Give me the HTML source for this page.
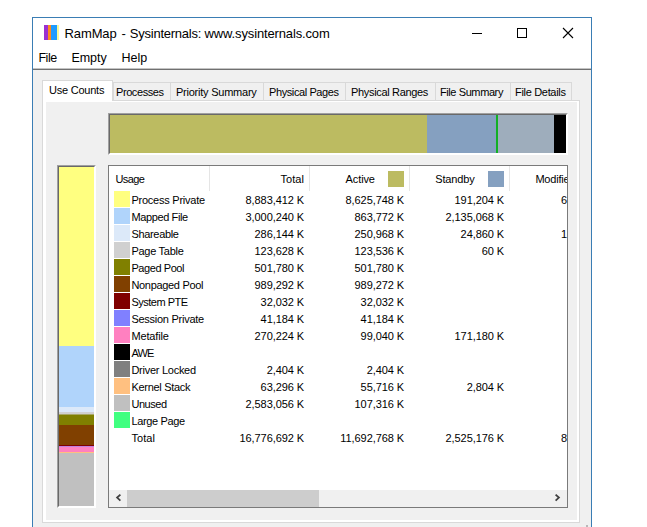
<!DOCTYPE html>
<html><head><meta charset="utf-8"><title>RamMap</title>
<style>
html,body{margin:0;padding:0;background:#fff;}
body{width:647px;height:527px;position:relative;overflow:hidden;font-family:"Liberation Sans",sans-serif;color:#000;}
div{position:absolute;box-sizing:border-box;}
.t{font-size:11px;line-height:16px;white-space:nowrap;height:16px;}
.r{text-align:right;letter-spacing:-0.08px;}
.nm{left:131.4px;}
.sw{left:114px;width:16px;height:16px;}
.tab{top:82px;height:18px;background:#f0f0f0;border:1px solid #d9d9d9;border-bottom:none;}
.hs{top:166px;width:1px;height:25px;background:#e5e5e5;}
.m{font-size:12.5px;line-height:18px;top:49px;white-space:nowrap;}
</style></head><body>
<!-- window frame -->
<div id="win" style="left:32px;top:17px;width:560px;height:520px;border:1px solid #3a7db4;background:#f0f0f0"></div>
<div id="title" style="left:33px;top:18px;width:558px;height:30px;background:#fff"></div>
<div id="icon" style="left:44px;top:25px;width:15px;height:15px;">
  <div style="left:0;top:0;width:4px;height:15px;background:#9b30d0"></div>
  <div style="left:4px;top:0;width:3px;height:15px;background:#ff8a1e"></div>
  <div style="left:7px;top:0;width:6px;height:15px;background:#1e9bff"></div>
  <div style="left:13px;top:0;width:2px;height:15px;background:#f6f99a"></div>
</div>
<div id="ttext" style="left:64.6px;top:25px;font-size:13px;line-height:18px;white-space:nowrap;letter-spacing:-0.138px">RamMap<span style="margin-left:1.4px;margin-right:0.8px"> -</span> <span style="letter-spacing:-0.248px">Sysinternals:</span> www.sysinternals.com</div>
<!-- caption buttons -->
<svg style="position:absolute;left:470px;top:18px" width="120" height="30" viewBox="0 0 120 30">
 <path d="M2 15.5h10" stroke="#000" stroke-width="1" fill="none"/>
 <rect x="47.5" y="10.5" width="9" height="9" stroke="#000" stroke-width="1" fill="none"/>
 <path d="M93 10l10 10M103 10l-10 10" stroke="#000" stroke-width="1.1" fill="none"/>
</svg>
<!-- menu -->
<div id="menu" style="left:33px;top:48px;width:558px;height:20px;background:#fff"></div>
<div class="m" id="mfile" style="left:38.4px;letter-spacing:-0.452px">File</div>
<div class="m" id="mempty" style="left:71.4px;letter-spacing:-0.034px">Empty</div>
<div class="m" id="mhelp" style="left:121.6px;letter-spacing:-0.073px">Help</div>
<div style="left:33px;top:68px;width:558px;height:1px;background:#c4c4c4"></div>
<div style="left:33px;top:69px;width:558px;height:1px;background:#707070"></div>
<!-- tab pane -->
<div id="pane" style="left:42px;top:100px;width:538px;height:423px;background:#fff;border:1px solid #d9d9d9"></div>
<div id="dlg" style="left:46px;top:102px;width:531px;height:418px;background:#f0f0f0"></div>
<!-- tabs -->
<div class="tab" style="left:113px;width:58px"></div><div class="t" style="left:116.0px;top:84px;letter-spacing:-0.42px">Processes</div>
<div class="tab" style="left:170px;width:94px"></div><div class="t" style="left:176.0px;top:84px;letter-spacing:-0.236px">Priority Summary</div>
<div class="tab" style="left:263px;width:83px"></div><div class="t" style="left:269.0px;top:84px;letter-spacing:-0.401px">Physical Pages</div>
<div class="tab" style="left:345px;width:91px"></div><div class="t" style="left:351.0px;top:84px;letter-spacing:-0.331px">Physical Ranges</div>
<div class="tab" style="left:435px;width:76px"></div><div class="t" style="left:439.9px;top:84px;letter-spacing:-0.395px">File Summary</div>
<div class="tab" style="left:510px;width:62px"></div><div class="t" style="left:515.1px;top:84px;letter-spacing:-0.328px">File Details</div>

<div id="tab0" style="left:42px;top:80px;width:71px;height:21px;background:#fff;border:1px solid #d9d9d9;border-bottom:none"></div>
<div class="t" style="left:49px;top:82px;letter-spacing:-0.232px">Use Counts</div>
<!-- top bar -->
<div id="hbar" style="left:108px;top:113px;width:460px;height:42px;border:1px solid;border-color:#a0a0a0 #fff #fff #a0a0a0;background:#fff">
 <div style="left:0;top:0;width:458px;height:40px;border:1px solid;border-color:#696969 #fff #fff #696969;background:#bcbb61">
  <div style="left:317px;top:0;width:69px;height:38px;background:#85a0c0"></div>
  <div style="left:386px;top:0;width:2px;height:38px;background:#12b024"></div>
  <div style="left:388px;top:0;width:56px;height:38px;background:#9eadbc"></div>
  <div style="left:444px;top:0;width:12px;height:38px;background:#000"></div>
 </div>
</div>
<!-- left bar -->
<div id="vbar" style="left:57px;top:165px;width:39px;height:343px;border:1px solid;border-color:#a0a0a0 #fff #fff #a0a0a0;background:#fff">
 <div style="left:0;top:0;width:37px;height:341px;border:1px solid;border-color:#696969 #fff #fff #696969;background:#ffff80">
  <div style="left:0;top:179px;width:35px;height:61px;background:#b0d4fb"></div>
  <div style="left:0;top:240px;width:35px;height:5px;background:#dce9f9"></div>
  <div style="left:0;top:245px;width:35px;height:2px;background:#d0d0d0"></div>
  <div style="left:0;top:247px;width:35px;height:1px;background:#a8a868"></div>
  <div style="left:0;top:248px;width:35px;height:10px;background:#808000"></div>
  <div style="left:0;top:258px;width:35px;height:20px;background:#804000"></div>
  <div style="left:0;top:278px;width:35px;height:1px;background:#800000"></div>
  <div style="left:0;top:279px;width:35px;height:1px;background:#c080e0"></div>
  <div style="left:0;top:280px;width:35px;height:5px;background:#ff80c0"></div>
  <div style="left:0;top:285px;width:35px;height:1px;background:#ffc080"></div>
  <div style="left:0;top:286px;width:35px;height:53px;background:#c0c0c0"></div>
 </div>
</div>
<!-- list -->
<div id="list" style="left:108px;top:165px;width:460px;height:343px;background:#fff;border:1px solid #7a7a7a"></div>
<div class="hs" style="left:209px"></div><div class="hs" style="left:309px"></div><div class="hs" style="left:409px"></div><div class="hs" style="left:509px"></div>
<div class="t" id="hU" style="left:115.4px;top:171px;letter-spacing:-0.599px">Usage</div>
<div class="t r" id="hT" style="right:343px;top:171px;letter-spacing:0.05px">Total</div>
<div class="t" id="hA" style="left:345.6px;top:171px;letter-spacing:-0.114px">Active</div>
<div class="t" id="hS" style="left:435.2px;top:171px;letter-spacing:-0.146px">Standby</div>
<div class="t" id="hM" style="left:535.4px;top:171px;width:31.6px;overflow:hidden;letter-spacing:-0.2px">Modified</div>
<div style="left:388px;top:171px;width:16px;height:16px;background:#bcbb61"></div>
<div style="left:488px;top:171px;width:16px;height:16px;background:#85a0c0"></div>
<div class="sw" style="top:191px;background:#ffff80"></div>
<div class="t nm" style="top:192px;letter-spacing:-0.231px">Process Private</div>
<div class="t r" style="top:192px;right:343px">8,883,412 K</div>
<div class="t r" style="top:192px;right:243px">8,625,748 K</div>
<div class="t r" style="top:192px;right:143px">191,204 K</div>
<div class="t r" style="top:192px;right:80px">6</div>
<div class="sw" style="top:208px;background:#b0d4fb"></div>
<div class="t nm" style="top:209px;letter-spacing:-0.375px">Mapped File</div>
<div class="t r" style="top:209px;right:343px">3,000,240 K</div>
<div class="t r" style="top:209px;right:243px">863,772 K</div>
<div class="t r" style="top:209px;right:143px">2,135,068 K</div>
<div class="sw" style="top:225px;background:#dce9f9"></div>
<div class="t nm" style="top:226px;letter-spacing:-0.32px">Shareable</div>
<div class="t r" style="top:226px;right:343px">286,144 K</div>
<div class="t r" style="top:226px;right:243px">250,968 K</div>
<div class="t r" style="top:226px;right:143px">24,860 K</div>
<div class="t r" style="top:226px;right:80px">1</div>
<div class="sw" style="top:242px;background:#d0d0d0"></div>
<div class="t nm" style="top:243px;letter-spacing:-0.273px">Page Table</div>
<div class="t r" style="top:243px;right:343px">123,628 K</div>
<div class="t r" style="top:243px;right:243px">123,536 K</div>
<div class="t r" style="top:243px;right:143px">60 K</div>
<div class="sw" style="top:259px;background:#808000"></div>
<div class="t nm" style="top:260px;letter-spacing:-0.421px">Paged Pool</div>
<div class="t r" style="top:260px;right:343px">501,780 K</div>
<div class="t r" style="top:260px;right:243px">501,780 K</div>
<div class="sw" style="top:276px;background:#804000"></div>
<div class="t nm" style="top:277px;letter-spacing:-0.312px">Nonpaged Pool</div>
<div class="t r" style="top:277px;right:343px">989,292 K</div>
<div class="t r" style="top:277px;right:243px">989,272 K</div>
<div class="sw" style="top:293px;background:#800000"></div>
<div class="t nm" style="top:294px;letter-spacing:-0.481px">System PTE</div>
<div class="t r" style="top:294px;right:343px">32,032 K</div>
<div class="t r" style="top:294px;right:243px">32,032 K</div>
<div class="sw" style="top:310px;background:#8080ff"></div>
<div class="t nm" style="top:311px;letter-spacing:-0.26px">Session Private</div>
<div class="t r" style="top:311px;right:343px">41,184 K</div>
<div class="t r" style="top:311px;right:243px">41,184 K</div>
<div class="sw" style="top:327px;background:#ff80c0"></div>
<div class="t nm" style="top:328px;letter-spacing:-0.147px">Metafile</div>
<div class="t r" style="top:328px;right:343px">270,224 K</div>
<div class="t r" style="top:328px;right:243px">99,040 K</div>
<div class="t r" style="top:328px;right:143px">171,180 K</div>
<div class="sw" style="top:344px;background:#000000"></div>
<div class="t nm" style="top:345px;letter-spacing:-0.828px">AWE</div>
<div class="sw" style="top:361px;background:#808080"></div>
<div class="t nm" style="top:362px;letter-spacing:-0.263px">Driver Locked</div>
<div class="t r" style="top:362px;right:343px">2,404 K</div>
<div class="t r" style="top:362px;right:243px">2,404 K</div>
<div class="sw" style="top:378px;background:#ffc080"></div>
<div class="t nm" style="top:379px;letter-spacing:-0.289px">Kernel Stack</div>
<div class="t r" style="top:379px;right:343px">63,296 K</div>
<div class="t r" style="top:379px;right:243px">55,716 K</div>
<div class="t r" style="top:379px;right:143px">2,804 K</div>
<div class="sw" style="top:395px;background:#c0c0c0"></div>
<div class="t nm" style="top:396px;letter-spacing:-0.444px">Unused</div>
<div class="t r" style="top:396px;right:343px">2,583,056 K</div>
<div class="t r" style="top:396px;right:243px">107,316 K</div>
<div class="sw" style="top:412px;background:#40ff80"></div>
<div class="t nm" style="top:413px;letter-spacing:-0.343px">Large Page</div>
<div class="t nm" style="top:430px;letter-spacing:0.088px">Total</div>
<div class="t r" style="top:430px;right:343px">16,776,692 K</div>
<div class="t r" style="top:430px;right:243px">11,692,768 K</div>
<div class="t r" style="top:430px;right:143px">2,525,176 K</div>
<div class="t r" style="top:430px;right:80px">8</div>
<!-- scrollbar -->
<div id="sb" style="left:109px;top:490px;width:458px;height:17px;background:#f0f0f0"></div>
<div id="thumb" style="left:127px;top:490px;width:192px;height:17px;background:#cdcdcd"></div>
<svg style="position:absolute;left:109px;top:490px" width="458" height="17" viewBox="0 0 458 17">
 <path d="M11.4 4.6L8.1 7.6L11.4 10.6" stroke="#404040" stroke-width="1.8" fill="none"/>
 <path d="M446.6 4.6L449.9 7.6L446.6 10.6" stroke="#404040" stroke-width="1.8" fill="none"/>
</svg>
<!-- resize grip dot -->
<div style="left:586px;top:525px;width:2px;height:2px;background:#b8b8b8"></div>
</body></html>
